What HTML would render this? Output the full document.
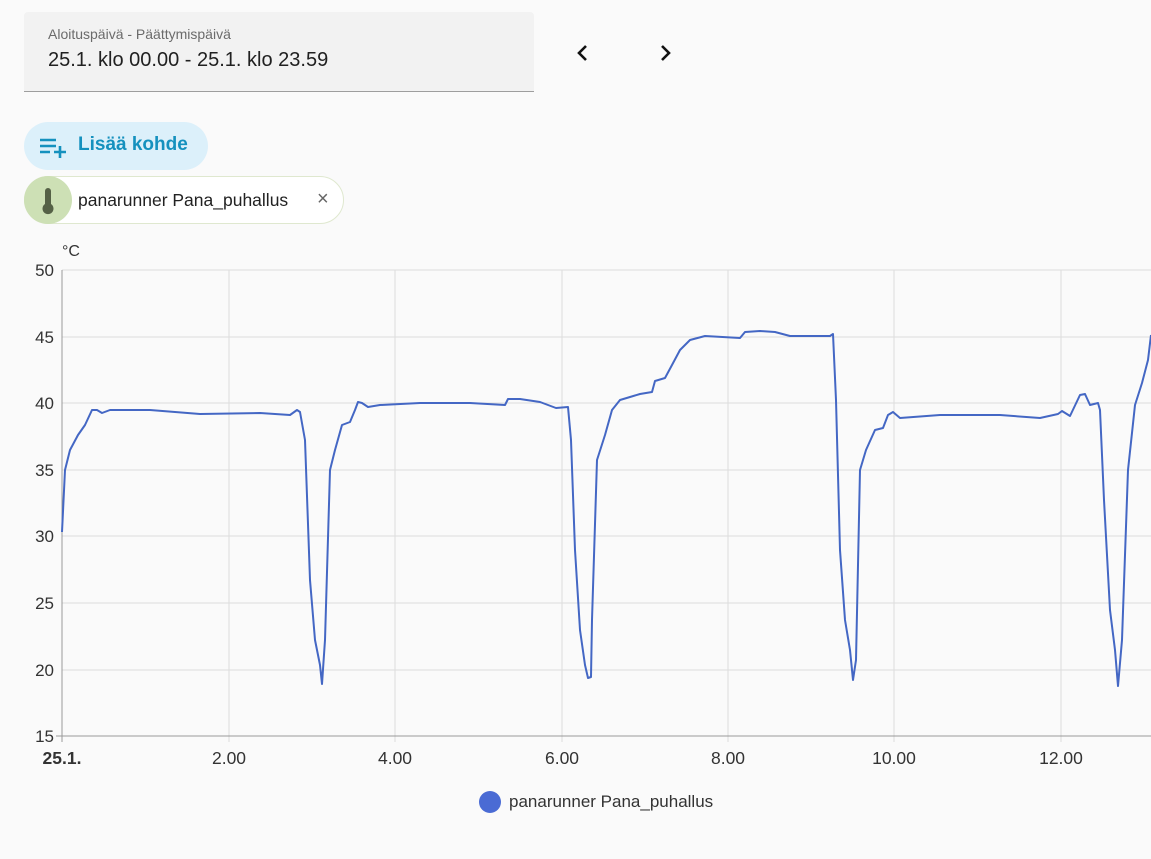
<!DOCTYPE html><html><head><meta charset="utf-8"><style>
body{margin:0;width:1151px;height:859px;background:#fafafa;font-family:"Liberation Sans",sans-serif;overflow:hidden;position:relative}
.field{position:absolute;left:24px;top:12px;width:510px;height:79px;background:#f2f2f2;border-bottom:1px solid #9e9e9e;border-radius:4px 4px 0 0}
.lbl{position:absolute;left:24px;top:14px;font-size:14px;color:#6b6b6b}
.val{position:absolute;left:24px;top:37px;font-size:20px;color:#212121}
.btn{position:absolute;left:24px;top:122px;width:184px;height:48px;background:#dcf0fa;border-radius:24px}
.btn span{position:absolute;left:54px;top:12px;font-size:19px;font-weight:bold;color:#1591be}
.chip{position:absolute;left:24px;top:176px;width:320px;height:48px;border:1px solid #dfe8cf;border-radius:24px;background:#fff;box-sizing:border-box}
.chip .ic{position:absolute;left:-1px;top:-1px;width:48px;height:48px;border-radius:24px;background:#cde0b5}
.chip span{position:absolute;left:53px;top:13px;font-size:17.5px;color:#222}
.chip .x{position:absolute;left:292px;top:11px;font-size:20px;color:#666}
svg text{font-family:"Liberation Sans",sans-serif}
</style></head><body>
<div class="field"><div class="lbl">Aloituspäivä - Päättymispäivä</div><div class="val">25.1. klo 00.00 - 25.1. klo 23.59</div></div>
<svg style="position:absolute;left:570px;top:40px" width="110" height="26"><path d="M16 6 L9 13 L16 20" stroke="#111" stroke-width="2.6" fill="none"/><path d="M92 6 L99 13 L92 20" stroke="#111" stroke-width="2.6" fill="none"/></svg>
<div class="btn"><svg style="position:absolute;left:16px;top:13px" width="30" height="24"><path d="M0 5h16M0 11h16M0 17h10M20 11v12M14 17h12" stroke="#1591be" stroke-width="2.6" fill="none"/></svg><span>Lisää kohde</span></div>
<div class="chip"><div class="ic"><svg width="48" height="48"><path d="M24 12 a3 3 0 0 1 3 3 v13 a5.5 5.5 0 1 1 -6 0 v-13 a3 3 0 0 1 3 -3z" fill="#556146"/></svg></div><span>panarunner Pana_puhallus</span><div class="x">×</div></div>
<svg style="position:absolute;left:0;top:0" width="1151" height="859">
<g stroke="#dcdcdc" stroke-width="1">
<line x1="62" y1="270" x2="1151" y2="270"/><line x1="62" y1="337" x2="1151" y2="337"/><line x1="62" y1="403" x2="1151" y2="403"/><line x1="62" y1="470" x2="1151" y2="470"/><line x1="62" y1="536" x2="1151" y2="536"/><line x1="62" y1="603" x2="1151" y2="603"/><line x1="62" y1="670" x2="1151" y2="670"/>
<line x1="229" y1="270" x2="229" y2="742"/><line x1="395" y1="270" x2="395" y2="742"/><line x1="562" y1="270" x2="562" y2="742"/><line x1="728" y1="270" x2="728" y2="742"/><line x1="894" y1="270" x2="894" y2="742"/><line x1="1061" y1="270" x2="1061" y2="742"/>
</g>
<line x1="56" y1="736" x2="1151" y2="736" stroke="#9a9a9a"/><line x1="62" y1="270" x2="62" y2="742" stroke="#9a9a9a"/>
<g font-size="17" fill="#333" text-anchor="end">
<text x="54" y="276">50</text><text x="54" y="343">45</text><text x="54" y="409">40</text><text x="54" y="476">35</text><text x="54" y="542">30</text><text x="54" y="609">25</text><text x="54" y="676">20</text><text x="54" y="742">15</text></g>
<text x="62" y="256" font-size="16" fill="#333">°C</text>
<g font-size="17.5" fill="#333" text-anchor="middle">
<text x="62" y="764" font-weight="bold">25.1.</text><text x="229" y="764">2.00</text><text x="395" y="764">4.00</text><text x="562" y="764">6.00</text><text x="728" y="764">8.00</text><text x="894" y="764">10.00</text><text x="1061" y="764">12.00</text></g>
<polyline fill="none" stroke="#4467c4" stroke-width="2" stroke-linejoin="round" points="62,532 65,470 70,450 78,435 85,425 92,410 97,410 102,413 110,410 150,410 200,414 260,413 290,415 297,410 300,412 305,440 310,580 315,640 320,665 322,684 325,640 330,470 335,450 342,425 350,422 355,410 358,402 362,403 368,407 380,405 420,403 470,403 505,405 508,399 520,399 540,402 556,408 568,407 571,440 575,550 580,630 585,665 588,678 591,677 592,620 597,460 605,435 612,410 620,400 630,397 640,394 652,392 655,381 665,378 672,365 680,350 690,340 705,336 740,338 745,332 760,331 775,332 790,336 830,336 833,334 836,400 840,550 845,620 850,650 853,680 856,660 860,470 866,450 875,430 883,428 888,415 893,412 900,418 940,415 1000,415 1040,418 1058,414 1062,411 1070,416 1080,395 1085,394 1090,405 1098,403 1100,410 1104,500 1110,610 1115,650 1118,686 1122,640 1128,470 1135,405 1142,383 1148,360 1151,335"/>
<circle cx="490" cy="802" r="11" fill="#4a6bd4"/>
<text x="509" y="807" font-size="17" fill="#333">panarunner Pana_puhallus</text>
</svg>
</body></html>
